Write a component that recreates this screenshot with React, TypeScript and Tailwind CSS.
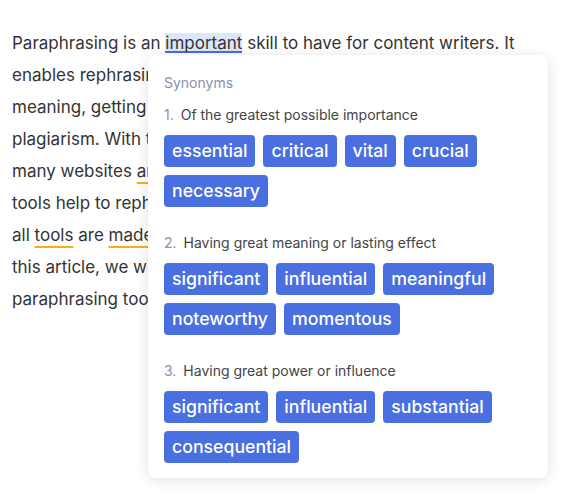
const lines: React.ReactNode[] = [
  <>
    Paraphrasing is an{' '}
    <span className="bg-[#dce7f9] shadow-[inset_0_-2px_0_#4a6cdc]">important</span> skill to have for content writers. It
  </>,
  <>enables rephrasing a piece of text while keeping its original</>,
  <>meaning, getting rid of repetition and avoiding accidental</>,
  <>plagiarism. With the growing demand for fresh content,</>,
  <>
    many websites <span className="underline decoration-[#f5b014] decoration-2 underline-offset-[5px]">are</span> offering free
    paraphrasing tools.
  </>,
  <>tools help to rephrase sentences quickly and easily. But not</>,
  <>
    all <span className="underline decoration-[#f5b014] decoration-2 underline-offset-[5px]">tools</span> are{' '}
    <span className="underline decoration-[#f5b014] decoration-2 underline-offset-[5px]">made</span> equal, and some are better than others. In
  </>,
  <>this article, we will review some of the best free online</>,
  <>paraphrasing tools available today.</>,
]

const groups = [
  { def: 'Of the greatest possible importance', words: ['essential', 'critical', 'vital', 'crucial', 'necessary'] },
  { def: 'Having great meaning or lasting effect', words: ['significant', 'influential', 'meaningful', 'noteworthy', 'momentous'] },
  { def: 'Having great power or influence', words: ['significant', 'influential', 'substantial', 'consequential'] },
]

export default function App() {
  return (
    <div className="relative w-[586px] h-[498px] bg-white font-['Inter',sans-serif] overflow-hidden">
      <div className="pt-[27px] pl-3 text-[17px] leading-8 text-[#333333] whitespace-nowrap">
        {lines.map((l, i) => (
          <div key={i}>{l}</div>
        ))}
      </div>

      <div className="absolute left-[148px] top-[55px] w-[400px] rounded-lg bg-white px-4 pt-5 pb-[15px] shadow-[0_2px_14px_rgba(0,0,0,0.12)]">
        <div className="text-[14px] leading-4 text-[#8a90b4]">Synonyms</div>
        {groups.map((g, i) => (
          <div key={i} className={i === 0 ? 'mt-4' : 'mt-7'}>
            <div className="text-[14px] leading-4 text-[#444]">
              <span className="text-[#8a90b4] mr-[3px]">{i + 1}.</span> {g.def}
            </div>
            <div className="mt-[12px] flex flex-wrap gap-2 w-[340px]">
              {g.words.map((w) => (
                <span key={w} className="h-8 px-2 rounded-[4px] bg-[#4a6fe0] text-white text-[17.7px] leading-8 font-medium">
                  {w}
                </span>
              ))}
            </div>
          </div>
        ))}
      </div>
    </div>
  )
}
